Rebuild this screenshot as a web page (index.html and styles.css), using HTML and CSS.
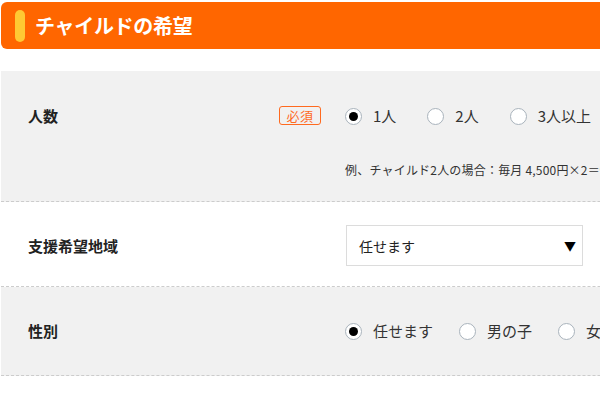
FILE: index.html
```html
<!DOCTYPE html>
<html lang="ja">
<head>
<meta charset="utf-8">
<link rel="stylesheet" href="styles.css">
</head>
<body>
<div class="page">
  <h2 class="heading"><span class="pill"></span><span class="heading-text">チャイルドの希望</span></h2>

  <div class="row row-gray row-count">
    <div class="head"><span class="label">人数</span><span class="req">必須</span></div>
    <div class="body">
      <div class="radios">
        <label class="opt"><span class="radio checked"></span><span>1人</span></label>
        <label class="opt"><span class="radio"></span><span>2人</span></label>
        <label class="opt"><span class="radio"></span><span>3人以上</span></label>
      </div>
      <p class="note">例、チャイルド2人の場合：毎月 4,500円×2＝9,000円</p>
    </div>
  </div>

  <div class="row row-white row-area">
    <div class="head"><span class="label">支援希望地域</span></div>
    <div class="body">
      <div class="select"><span>任せます</span><span class="arrow">▼</span></div>
    </div>
  </div>

  <div class="row row-gray row-sex">
    <div class="head"><span class="label">性別</span></div>
    <div class="body">
      <div class="radios radios-tight">
        <label class="opt"><span class="radio checked"></span><span>任せます</span></label>
        <label class="opt"><span class="radio"></span><span>男の子</span></label>
        <label class="opt"><span class="radio"></span><span>女の子</span></label>
      </div>
    </div>
  </div>
</div>
</body>
</html>
```

FILE: styles.css
```css
html, body {
  margin: 0;
  padding: 0;
  background: #fff;
  overflow: hidden;
}
body {
  font-family: "Noto Sans CJK JP", "Noto Sans", sans-serif;
  color: #222;
}
.page {
  width: 780px;
  padding: 2px 0 0 1px;
}
.heading {
  margin: 0 0 22px 0;
  height: 47px;
  background: #ff6600;
  border-radius: 6px;
  display: flex;
  align-items: center;
  padding-left: 14px;
  box-sizing: border-box;
}
.pill {
  width: 10px;
  height: 32px;
  border-radius: 5px;
  background: #ffc933;
  margin-right: 10px;
  margin-top: 1px;
}
.heading-text {
  color: #fff;
  font-size: 20px;
  font-weight: bold;
  line-height: 24px;
  letter-spacing: -0.3px;
}
.row {
  display: flex;
  padding-left: 27px;
  border-bottom: 1px dashed #cccccc;
}
.row-gray { background: #f1f1f1; }
.row-white { background: #fff; }
.row-count { padding-top: 35px; padding-bottom: 22px; }
.row-area { padding-top: 23px; padding-bottom: 20px; align-items: center; }
.row-sex { padding-top: 34px; padding-bottom: 34px; }
.head {
  width: 317px;
  display: flex;
  align-items: flex-start;
  flex-shrink: 0;
}
.label {
  width: 251px;
  font-size: 15px;
  font-weight: bold;
  line-height: 20px;
  color: #222;
}
.req {
  box-sizing: border-box;
  width: 42px;
  height: 19px;
  border: 1px solid #ff6a1f;
  border-radius: 3px;
  color: #ff6a1f;
  font-size: 13px;
  line-height: 17px;
  text-align: center;
  letter-spacing: 0.5px;
}
.body { flex: 1; }
.radios {
  display: flex;
  align-items: center;
  height: 20px;
}
.opt {
  display: flex;
  align-items: center;
  font-size: 15px;
  line-height: 20px;
  color: #333;
  margin-right: 31px;
}
.radios-tight .opt { margin-right: 26px; }
.radio {
  box-sizing: border-box;
  width: 17px;
  height: 17px;
  border-radius: 50%;
  border: 1px solid #a9b3bc;
  background: #fff;
  margin-right: 11px;
  display: flex;
  align-items: center;
  justify-content: center;
}
.radio.checked::after {
  content: "";
  width: 9px;
  height: 9px;
  border-radius: 50%;
  background: #000;
}
.note {
  margin: 35px 0 0 0;
  font-size: 12px;
  line-height: 18px;
  color: #333;
  white-space: nowrap;
  letter-spacing: 0.2px;
}
.select {
  box-sizing: border-box;
  width: 237px;
  height: 41px;
  margin-left: 1px;
  border: 1px solid #dcdcdc;
  background: #fff;
  display: flex;
  align-items: center;
  justify-content: space-between;
  padding: 0 6px 0 12px;
  font-size: 14px;
  color: #222;
}
.arrow {
  font-size: 12px;
  color: #000;
}
```
